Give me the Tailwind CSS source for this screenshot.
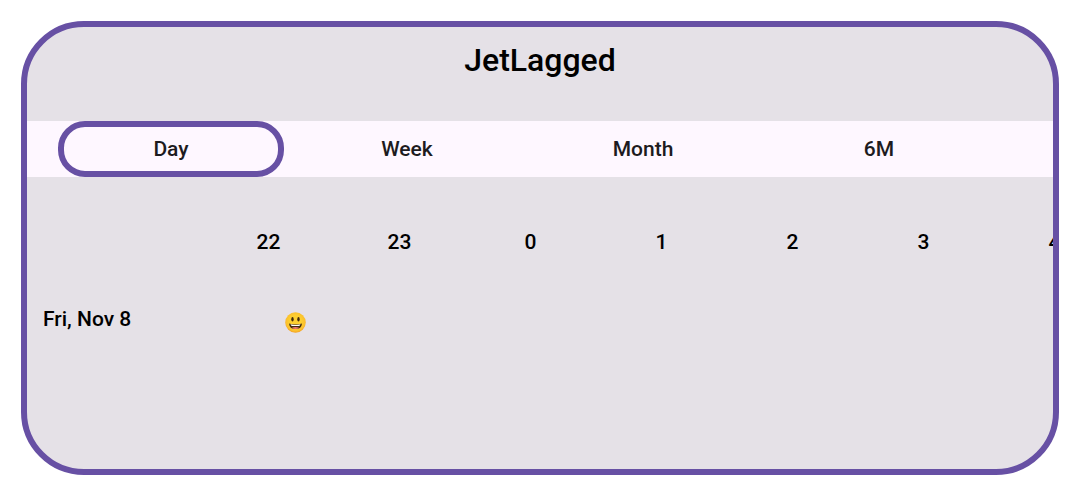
<!DOCTYPE html>
<html lang="en">
<head>
<meta charset="utf-8">
<meta name="viewport" content="width=device-width, initial-scale=1">
<title>JetLagged</title>
<script src="https://cdn.jsdelivr.net/npm/@tailwindcss/browser@4"></script>
</head>
<body class="bg-white p-[21px] font-[Roboto,sans-serif] font-medium text-black">
<main class="overflow-hidden rounded-[63px] border-6 border-[#6750a4] bg-[#e5e1e7] pb-28">
  <h1 class="pt-3 text-center text-[32px] leading-[42px]">JetLagged</h1>
  <nav aria-label="Period" class="mt-10 overflow-hidden bg-[#fef7ff] pl-[31px] text-[21px] text-[#1d1b20]">
    <div role="tablist" class="flex gap-[10px]">
      <button role="tab" aria-selected="true" class="h-14 w-[226px] shrink-0 rounded-[27px] border-6 border-[#6750a4] pt-0.5">Day</button>
      <button role="tab" aria-selected="false" class="h-14 w-[226px] shrink-0 pt-0.5">Week</button>
      <button role="tab" aria-selected="false" class="h-14 w-[226px] shrink-0 pt-0.5">Month</button>
      <button role="tab" aria-selected="false" class="h-14 w-[226px] shrink-0 pt-0.5">6M</button>
    </div>
  </nav>
  <table class="mt-[27px] w-[1093px] table-fixed text-[21px]">
    <thead>
      <tr class="h-[78px]">
        <td class="w-44"></td>
        <th scope="col" class="font-medium">22</th>
        <th scope="col" class="font-medium">23</th>
        <th scope="col" class="font-medium">0</th>
        <th scope="col" class="font-medium">1</th>
        <th scope="col" class="font-medium">2</th>
        <th scope="col" class="font-medium">3</th>
        <th scope="col" class="font-medium">4</th>
      </tr>
    </thead>
    <tbody>
      <tr class="h-[75px]">
        <th scope="row" class="pl-4 text-left font-medium">Fri, Nov 8</th>
        <td colspan="7" class="pt-1.5 pl-[82px]">
          <svg role="img" aria-label="Smiling face" class="size-[21px]" viewBox="0 0 42 42">
            <defs>
              <radialGradient id="face" cx="50%" cy="45%" r="54%">
                <stop offset="0.5" stop-color="#fdd030"/>
                <stop offset="0.85" stop-color="#fbc02d"/>
                <stop offset="1" stop-color="#f4a223"/>
              </radialGradient>
            </defs>
            <circle cx="21" cy="21" r="20.5" fill="url(#face)"/>
            <ellipse cx="15" cy="14.5" rx="2.4" ry="4.6" fill="#422b0d"/>
            <ellipse cx="27" cy="14.5" rx="2.4" ry="4.6" fill="#422b0d"/>
            <path d="M8 23 Q21 27 34 23 Q33 34 21 34 Q9 34 8 23Z" fill="#422b0d"/>
            <path d="M11 24.500 Q21 27 31 24.500 Q30 27.500 28 27.800 Q21 28.600 14 27.800 Q12 27.500 11 24.500Z" fill="#fff"/>
            <path d="M13 32 Q21 28 29 32 Q21 35.500 13 32Z" fill="#ed7770"/>
          </svg>
        </td>
      </tr>
    </tbody>
  </table>
</main>
</body>
</html>
